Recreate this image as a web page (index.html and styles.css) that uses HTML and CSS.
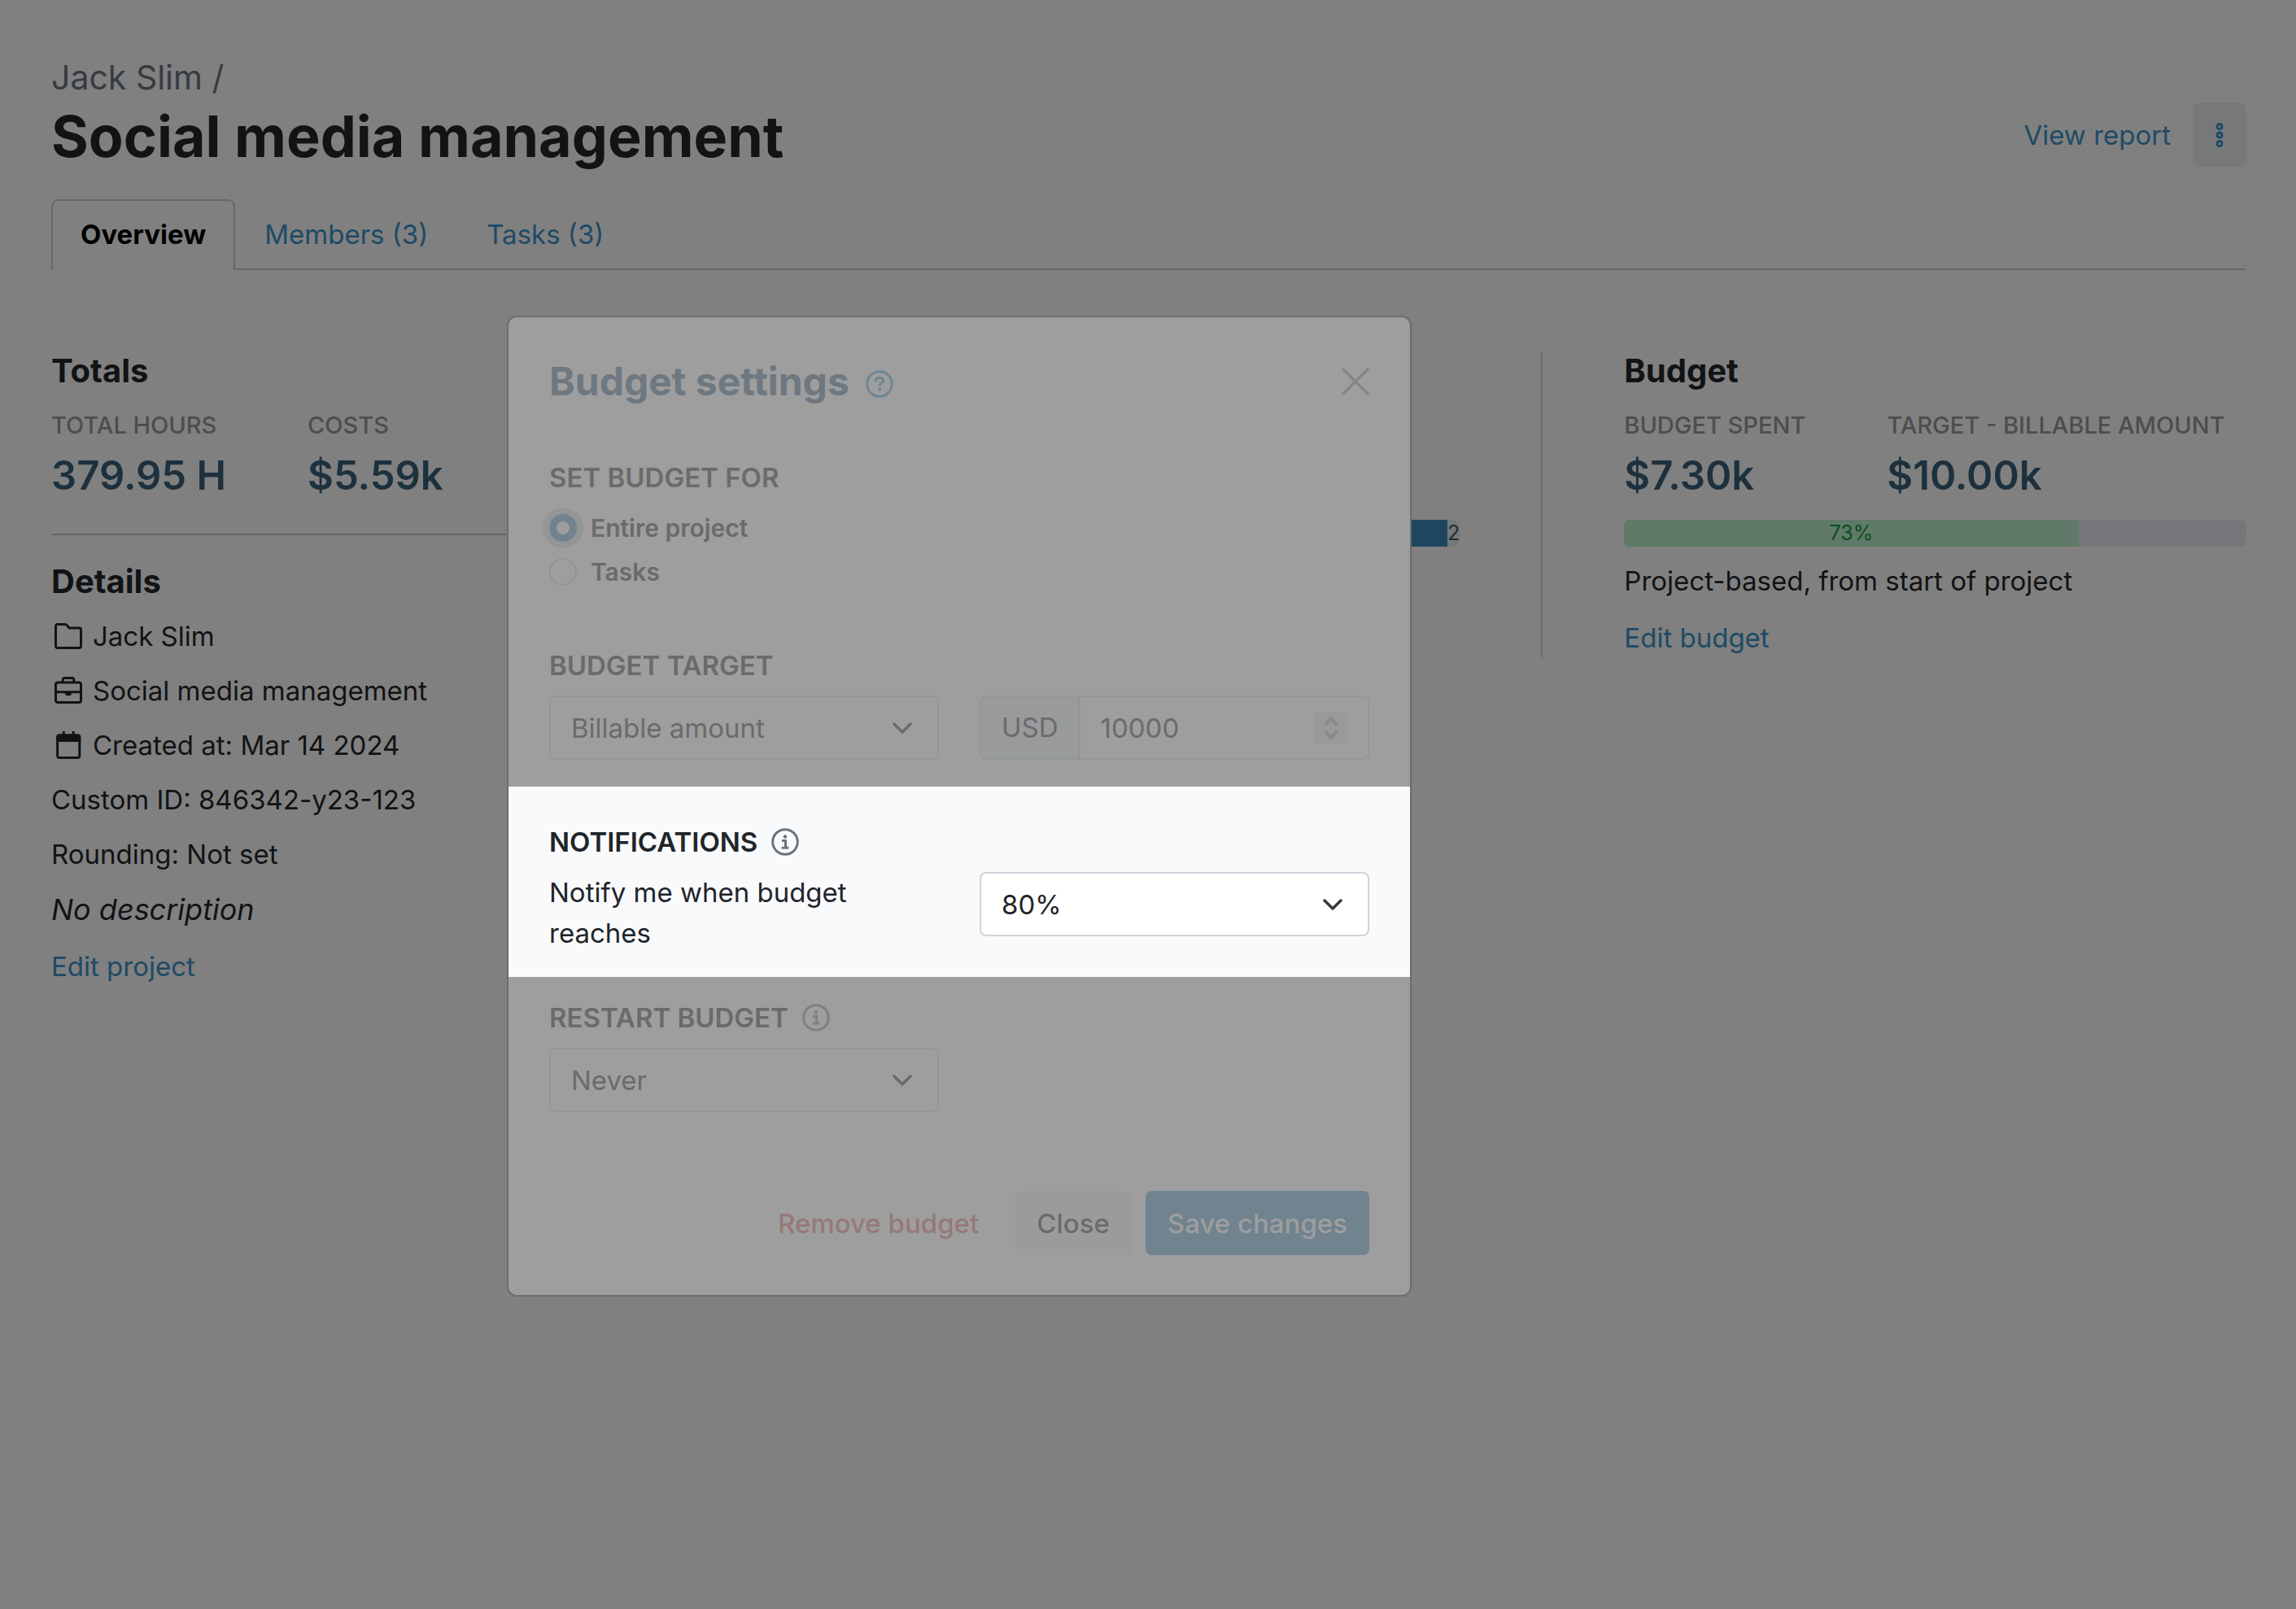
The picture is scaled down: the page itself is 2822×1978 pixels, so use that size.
FILE: index.html
```html
<!DOCTYPE html>
<html lang="en">
<head>
    <meta charset="utf-8">
    <title>Social media management</title>
    <link rel="stylesheet" href="styles.css">
</head>
<body>
    <header class="page-header">
        <div>
            <div class="breadcrumb">Jack Slim /</div>
            <h1>Social media management</h1>
        </div>
        <div class="header-actions">
            <a href="#" class="link">View report</a>
            <button type="button" class="btn-more" aria-label="More">
                <svg width="10" height="32" viewBox="0 0 10 32" fill="none" stroke="currentColor" stroke-width="3">
                    <circle cx="5" cy="5.5" r="3"/>
                    <circle cx="5" cy="16" r="3"/>
                    <circle cx="5" cy="26.5" r="3"/>
                </svg>
            </button>
        </div>
    </header>

    <nav class="tabs">
        <a href="#" class="tab active">Overview</a>
        <a href="#" class="tab">Members (3)</a>
        <a href="#" class="tab">Tasks (3)</a>
    </nav>

    <main class="columns">
        <section class="column">
            <h2>Totals</h2>
            <div class="stats">
                <div class="stat">
                    <div class="stat-label">TOTAL HOURS</div>
                    <div class="stat-value">379.95 H</div>
                </div>
                <div class="stat">
                    <div class="stat-label">COSTS</div>
                    <div class="stat-value">$5.59k</div>
                </div>
            </div>
            <hr>
            <h2>Details</h2>
            <ul class="details">
                <li>
                    <svg class="icon" viewBox="0 0 16 16" fill="none" stroke="currentColor" stroke-width="1.4" stroke-linejoin="round">
                        <path d="M.7 2.2a1 1 0 0 1 1-1h4.4c.5 0 .8.1 1.1.5l1.3 1.6h5.8a1 1 0 0 1 1 1v9.5a1 1 0 0 1-1 1H1.7a1 1 0 0 1-1-1z"/>
                    </svg>
                    Jack Slim
                </li>
                <li>
                    <svg class="icon" viewBox="0 0 16 16" fill="none" stroke="currentColor" stroke-width="1.4" stroke-linejoin="round">
                        <rect x=".7" y="3.3" width="14.6" height="11.5" rx="1.2"/>
                        <path d="M4.8 3.3V1.7a1 1 0 0 1 1-1h4.400a1 1 0 0 1 1 1v1.600M.7 8.800h14.600"/>
                        <path d="M6.2 8.8h3.6v.9a1.200 1.200 0 0 1-1.200 1.200H7.400a1.200 1.200 0 0 1-1.200-1.200z" fill="currentColor" stroke="none"/>
                    </svg>
                    Social media management
                </li>
                <li>
                    <svg class="icon" viewBox="0 0 16 16" fill="none" stroke="currentColor" stroke-width="1.4">
                        <rect x="1.7" y="2.3" width="12.8" height="13" rx="1.2"/>
                        <path d="M1.7 5.4V3.3a1 1 0 0 1 1-1h10.8a1 1 0 0 1 1 1v2.1z" fill="currentColor"/>
                        <path d="M5.3 0v2.5M10.9 0v2.5"/>
                    </svg>
                    Created at: Mar 14 2024
                </li>
                <li>Custom ID: 846342-y23-123</li>
                <li>Rounding: Not set</li>
                <li class="tall"><em>No description</em></li>
                <li class="tall"><a href="#" class="link">Edit project</a></li>
            </ul>
        </section>

        <section class="column">
            <div class="bar hours-bar">
                <div class="bar-fill hours" style="width: 98%"></div>
                <span>2</span>
            </div>
        </section>

        <section class="column">
            <h2>Budget</h2>
            <div class="stats">
                <div class="stat">
                    <div class="stat-label">BUDGET SPENT</div>
                    <div class="stat-value">$7.30k</div>
                </div>
                <div class="stat">
                    <div class="stat-label">TARGET - BILLABLE AMOUNT</div>
                    <div class="stat-value">$10.00k</div>
                </div>
            </div>
            <div class="bar budget-bar">
                <div class="bar-fill spent" style="width: 73%">73%</div>
            </div>
            <p class="budget-note">Project-based, from start of project</p>
            <a href="#" class="link edit-budget">Edit budget</a>
        </section>
    </main>

    <form class="modal" role="dialog" aria-labelledby="modal-title">
        <div class="modal-header">
            <h2 id="modal-title">Budget settings</h2>
            <svg class="icon-help" viewBox="0 0 34 34" fill="none" stroke="currentColor" stroke-width="3" stroke-linecap="round">
                <circle cx="17" cy="17" r="15.3"/>
                <path d="M12.4 13c0-2.4 1.9-3.6 4.6-3.6s4.7 1.3 4.7 3.5c0 2.9-4.5 2.7-4.5 5.9"/>
                <circle cx="17.2" cy="23.8" r="2" fill="currentColor" stroke="none"/>
            </svg>
            <button type="button" class="btn-x" aria-label="Close dialog">
                <svg viewBox="0 0 34 34" fill="none" stroke="currentColor" stroke-width="3.5" stroke-linecap="round">
                    <path d="M2 2l30 30M32 2L2 32"/>
                </svg>
            </button>
        </div>

        <fieldset class="section">
            <legend class="label">SET BUDGET FOR</legend>
            <div class="radio-row">
                <input type="radio" id="entire" name="scope" checked>
                <label for="entire">Entire project</label>
            </div>
            <div class="radio-row">
                <input type="radio" id="tasks" name="scope">
                <label for="tasks">Tasks</label>
            </div>
        </fieldset>

        <div class="section target">
            <label class="label" for="target">BUDGET TARGET</label>
            <div class="two-cols">
                <div class="select">
                    <select id="target"><option>Billable amount</option></select>
                    <svg class="chevron" viewBox="0 0 24 14"><path d="M2 2l10 10L22 2"/></svg>
                </div>
                <div class="amount">
                    <label for="amount">USD</label>
                    <input type="number" id="amount" value="10000">
                    <div class="spinner">
                        <svg viewBox="0 0 16 28"><path d="M2 9l6-7 6 7M2 19l6 7 6-7"/></svg>
                    </div>
                </div>
            </div>
        </div>

        <div class="section highlight">
            <div class="label">
                NOTIFICATIONS
                <svg class="icon-info" viewBox="0 0 34 34" fill="none" stroke="currentColor" stroke-width="3">
                    <circle cx="17" cy="17" r="15.3"/>
                    <path d="M13 15.5h4.5v9M12.7 24.3h8.6"/>
                    <circle cx="17" cy="10.5" r="2.2" fill="currentColor" stroke="none"/>
                </svg>
            </div>
            <div class="two-cols">
                <label for="notify" class="notify-text">Notify me when budget reaches</label>
                <div class="select">
                    <select id="notify"><option>80%</option></select>
                    <svg class="chevron" viewBox="0 0 24 14"><path d="M2 2l10 10L22 2"/></svg>
                </div>
            </div>
        </div>

        <div class="section restart">
            <label class="label" for="restart">
                RESTART BUDGET
                <svg class="icon-info" viewBox="0 0 34 34" fill="none" stroke="currentColor" stroke-width="3">
                    <circle cx="17" cy="17" r="15.3"/>
                    <path d="M13 15.5h4.5v9M12.7 24.3h8.6"/>
                    <circle cx="17" cy="10.5" r="2.2" fill="currentColor" stroke="none"/>
                </svg>
            </label>
            <div class="two-cols">
                <div class="select">
                    <select id="restart"><option>Never</option></select>
                    <svg class="chevron" viewBox="0 0 24 14"><path d="M2 2l10 10L22 2"/></svg>
                </div>
            </div>
        </div>

        <div class="modal-footer">
            <button type="button" class="btn btn-remove">Remove budget</button>
            <button type="button" class="btn btn-close">Close</button>
            <button type="submit" class="btn btn-save">Save changes</button>
        </div>
    </form>
</body>
</html>
```
FILE: styles.css
```css
* {
    box-sizing: border-box;
}
body {
    margin: 0;
    padding: 70px 61px 0 63px;
    min-height: 100vh;
    position: relative;
    background: #808080;
    color: #111315;
    font-family: Inter, sans-serif;
    font-size: 33px;
    line-height: 50px;
}
h1, h2, p, ul, fieldset {
    margin: 0;
    padding: 0;
    border: 0;
}
button, input, select {
    font: inherit;
    color: inherit;
    margin: 0;
    border: 0;
}
h1 {
    margin-top: 8px;
    font-size: 70px;
    line-height: 80px;
    font-weight: 700;
}
h2 {
    font-size: 40px;
    line-height: 48px;
    font-weight: 700;
}
em {
    font-size: 36px;
}
.link {
    color: #1e4a66;
    text-decoration: none;
}

/* header */
.page-header {
    display: flex;
    justify-content: space-between;
    align-items: flex-end;
}
.breadcrumb {
    font-size: 41px;
    color: #373b40;
}
.header-actions {
    display: flex;
    align-items: center;
    gap: 27px;
    margin-bottom: 3px;
}
.btn-more {
    display: flex;
    align-items: center;
    justify-content: center;
    width: 66px;
    height: 79px;
    padding: 0;
    border-radius: 9px;
    background: #77787a;
    color: #1e4a66;
}

/* tabs */
.tabs {
    display: flex;
    margin-top: 37px;
    border-bottom: 2px solid #65696d;
}
.tab {
    padding: 18px 36px 17px;
    color: #1e4a66;
    text-decoration: none;
}
.tab.active {
    margin-bottom: -2px;
    padding: 16px 34px 19px;
    border: 2px solid #65696d;
    border-bottom: 0;
    border-radius: 9px 9px 0 0;
    background: #808080;
    color: #000;
    font-weight: 700;
}

/* columns */
.columns {
    display: flex;
    align-items: flex-start;
    margin-top: 100px;
}
.column {
    flex: 1 1 0;
    box-sizing: content-box;
}
.column + .column {
    margin-left: 100px;
    padding-left: 100px;
    border-left: 2px solid #6e6e6e;
}
.stats {
    display: flex;
    gap: 100px;
    margin-top: 23px;
}
.stat-label {
    font-size: 29px;
    line-height: 40px;
    font-weight: 500;
    color: #4d4d4d;
}
.stat-value {
    margin-top: 12px;
    font-size: 49px;
    line-height: 60px;
    font-weight: 600;
    color: #1d303d;
}
hr {
    margin: 41px 0 33px;
    border: 0;
    border-top: 2px solid #666;
}
.details {
    margin-top: 9px;
    list-style: none;
}
.details li {
    display: flex;
    align-items: center;
    gap: 13px;
    height: 67px;
}
.details .tall {
    height: 70px;
}
.icon {
    width: 34px;
    height: 34px;
    margin-left: 4px;
}
.bar {
    display: flex;
    height: 33px;
    border-radius: 8px;
    overflow: hidden;
    background: #747679;
    font-size: 25px;
    line-height: 33px;
}
.bar-fill {
    text-align: center;
}
.hours-bar {
    margin: 207px 0 137px;
    background: #77787a;
    color: #1d303d;
}
.hours {
    background: #1e4660;
}
.budget-bar {
    margin-top: 24px;
}
.spent {
    background: #5f7a68;
    color: #0f4a1c;
}
.budget-note {
    margin-top: 17px;
}
.edit-budget {
    display: block;
    margin-top: 20px;
}

/* modal */
.modal {
    position: absolute;
    top: 388px;
    left: 623px;
    width: 1112px;
    padding-bottom: 49px;
    border: 2px solid #6d6d6d;
    border-radius: 12px;
    background: #9e9e9e;
    color: #696b6d;
}
.modal-header {
    display: flex;
    align-items: center;
    gap: 20px;
    padding: 49px 50px 0;
}
.modal-header h2 {
    font-size: 48px;
    line-height: 60px;
    color: #6e7881;
}
.icon-help {
    width: 34px;
    height: 34px;
    margin-top: 6px;
    color: #6f8694;
}
.btn-x {
    display: flex;
    width: 34px;
    height: 34px;
    margin-left: auto;
    padding: 0;
    background: none;
    color: #848586;
}
.section {
    padding: 0 50px;
}
.modal fieldset.section {
    margin-top: 63px;
}
.label {
    display: flex;
    align-items: center;
    gap: 17px;
    margin-bottom: 12px;
    padding: 0;
    font-weight: 600;
}
fieldset .label {
    margin-bottom: 10px;
}
.radio-row {
    display: flex;
    align-items: center;
    gap: 17px;
    height: 54px;
    font-size: 30px;
    font-weight: 600;
}
.radio-row input {
    appearance: none;
    width: 34px;
    height: 34px;
    border: 2px solid #949494;
    border-radius: 50%;
}
.radio-row input:checked {
    border: 9px solid #70838f;
    box-shadow: 0 0 0 8px #929698;
}
.target {
    margin-top: 63px;
}
.two-cols {
    display: grid;
    grid-template-columns: 1fr 1fr;
    gap: 50px;
    align-items: start;
}
.select {
    display: grid;
    align-items: center;
}
.select select, .chevron {
    grid-area: 1 / 1;
}
.select select {
    appearance: none;
    width: 100%;
    height: 79px;
    padding: 0 25px;
    border: 2px solid #949596;
    border-radius: 8px;
    background: none;
}
.chevron {
    justify-self: end;
    width: 24px;
    height: 14px;
    margin-right: 33px;
    pointer-events: none;
}
.chevron path, .spinner path {
    fill: none;
    stroke: currentColor;
    stroke-width: 3.5;
    stroke-linecap: round;
    stroke-linejoin: round;
}
.amount {
    display: flex;
    align-items: center;
    height: 79px;
    border: 2px solid #939698;
    border-radius: 8px;
    overflow: hidden;
}
.amount label {
    padding: 0 25px;
    border-right: 2px solid #939698;
    background: #999a9b;
    line-height: 75px;
}
.amount input {
    appearance: textfield;
    flex: 1;
    min-width: 0;
    padding: 0 25px;
    background: none;
}
.amount input::-webkit-inner-spin-button {
    display: none;
}
.spinner {
    display: flex;
    align-items: center;
    justify-content: center;
    width: 40px;
    height: 40px;
    margin-right: 25px;
    background: #999;
    color: #858789;
}
.spinner svg {
    width: 16px;
    height: 28px;
}
.highlight {
    margin-top: 33px;
    padding-top: 43px;
    padding-bottom: 29px;
    background: #f9fafc;
    color: #212529;
}
.highlight .select select {
    border-color: #ced4da;
    background: #fff;
}
.highlight .chevron {
    color: #343a40;
}
.icon-info {
    width: 34px;
    height: 34px;
    color: #7d8082;
}
.highlight .icon-info {
    color: #6c757d;
}
.notify-text {
    padding-right: 60px;
}
.restart {
    margin-top: 25px;
}
.modal-footer {
    display: flex;
    justify-content: flex-end;
    gap: 17px;
    margin-top: 97px;
    padding: 0 50px;
}
.btn {
    height: 79px;
    padding: 0 27px;
    border-radius: 8px;
    background: none;
    font-weight: 500;
}
.btn-remove {
    color: #957978;
}
.btn-close {
    background: #9b9b9c;
}
.btn-save {
    background: #70838f;
    color: #9e9e9e;
}
```
